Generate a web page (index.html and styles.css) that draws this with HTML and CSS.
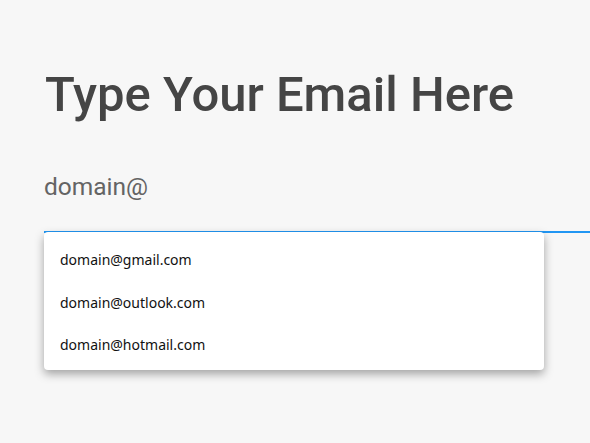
FILE: index.html
```html
<!DOCTYPE html>
<html>
<head>
<meta charset="utf-8">
<link rel="stylesheet" href="styles.css">
</head>
<body>
<main class="page">
  <h1 class="title">Type Your Email Here</h1>
  <div class="field">
    <div class="input">domain@</div>
    <div class="underline"></div>
    <ul class="suggestions">
      <li>domain@gmail.com</li>
      <li>domain@outlook.com</li>
      <li>domain@hotmail.com</li>
    </ul>
  </div>
</main>
</body>
</html>
```
FILE: styles.css
```css
html, body {
  margin: 0;
  padding: 0;
  background: #f7f7f7;
}
body {
  min-height: 443px;
}
.page {
  padding: 60px 0 0 44px;
  font-family: Roboto, "Liberation Sans", sans-serif;
}
.title {
  margin: 0;
  font-size: 49px;
  font-weight: 500;
  color: #454545;
  line-height: 70px;
  padding-left: 1px;
}
.field {
  margin-top: 42px;
  margin-right: -10px;
}
.input {
  font-size: 24.5px;
  color: #646464;
  line-height: 30px;
  height: 30px;
}
.underline {
  margin-top: 29px;
  height: 2px;
  background: #2196f3;
}
.suggestions {
  position: relative;
  width: 500px;
  margin: -1px 0 0 0;
  padding: 7px 0 3px;
  list-style: none;
  background: #fff;
  border-radius: 4px;
  box-shadow: 0 4px 10px rgba(0,0,0,0.35);
  font-family: "Noto Sans", "Open Sans", sans-serif;
  font-size: 14px;
  color: #111;
}
.suggestions li {
  height: 42.5px;
  line-height: 42px;
  padding-left: 16px;
}
```
